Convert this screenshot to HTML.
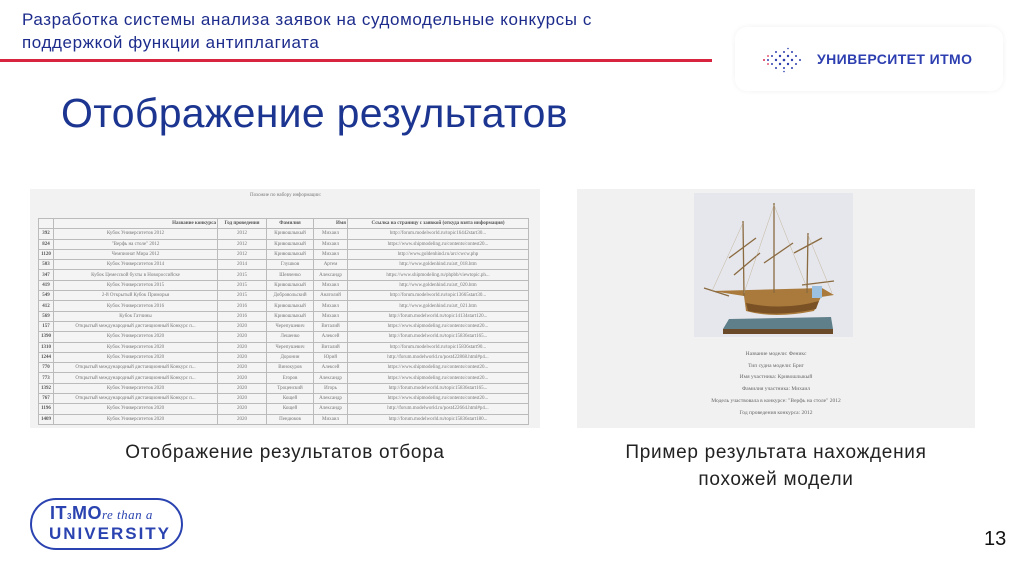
<!DOCTYPE html>
<html><head><meta charset="utf-8"><style>
body{margin:0;width:1024px;height:574px;background:#fff;position:relative;overflow:hidden;font-family:"Liberation Sans",sans-serif}
.a{position:absolute}
.hdr{left:22px;top:8px;font-size:17px;line-height:23px;color:#1d2c8c;letter-spacing:0.6px}
.title{left:61px;top:90px;font-size:41px;color:#1c3591;letter-spacing:0.3px}
.cap{font-size:19px;color:#222;text-align:center;line-height:27px;letter-spacing:0.7px}
table{border-collapse:separate;border-spacing:1px;font-family:"Liberation Serif",serif;font-size:5px;color:#777;background:#bbb;table-layout:fixed}
td{background:#f4f4f4;height:9.3px;padding:0 1px;text-align:center;white-space:nowrap;overflow:hidden;line-height:9px;border:0;box-sizing:border-box}
td.n{font-weight:bold;color:#555}
</style></head><body>
<div class="a hdr">Разработка системы анализа заявок на судомодельные конкурсы с<br>поддержкой функции антиплагиата</div>
<div class="a" style="left:0;top:59px;width:712px;height:3px;background:#d8243f"></div>
<div class="a" style="left:735px;top:27px;width:268px;height:64px;border-radius:12px;box-shadow:0 0 6px rgba(0,0,0,0.06);background:#fff"></div>
<svg class="a" style="left:762px;top:47px" width="52" height="26">
<g fill="#2d3fb0">
<circle cx="6" cy="13" r="1"/><circle cx="10" cy="9" r="1"/><circle cx="10" cy="17" r="1"/><circle cx="14" cy="5" r="1"/><circle cx="14" cy="13" r="1.2"/><circle cx="14" cy="21" r="1"/><circle cx="18" cy="9" r="1.2"/><circle cx="18" cy="17" r="1.2"/><circle cx="22" cy="5" r="1"/><circle cx="22" cy="13" r="1.3"/><circle cx="22" cy="21" r="1"/><circle cx="26" cy="9" r="1.2"/><circle cx="26" cy="17" r="1.2"/><circle cx="30" cy="5" r="1"/><circle cx="30" cy="13" r="1.2"/><circle cx="30" cy="21" r="1"/><circle cx="34" cy="9" r="1"/><circle cx="34" cy="17" r="1"/><circle cx="38" cy="13" r="1"/><circle cx="26" cy="1.5" r="0.8"/><circle cx="22" cy="24.5" r="0.8"/></g>
<g fill="#e0294a"><circle cx="2" cy="13" r="1"/><circle cx="6" cy="9" r="0.9"/><circle cx="6" cy="17" r="0.9"/></g>
</svg>
<div class="a" style="left:817px;top:51px;font-size:14px;font-weight:bold;color:#2d3fb0;letter-spacing:0.4px">УНИВЕРСИТЕТ ИТМО</div>
<div class="a title">Отображение результатов</div>

<div class="a" style="left:30px;top:189px;width:510px;height:239px;background:#f2f2f2"></div>
<div class="a" style="left:250px;top:193px;font-size:5px;color:#777;font-family:'Liberation Serif',serif">Похожие по набору информации:</div>
<div class="a" style="left:38px;top:218px;">
<table>
<tr><td style="width:14px"></td><td style="width:163px;text-align:right" class="n">Название конкурса</td><td class="n" style="width:48px">Год проведения</td><td class="n" style="width:46px">Фамилия</td><td class="n" style="width:33px;text-align:right">Имя</td><td class="n" style="width:180px">Ссылка на страницу с заявкой (откуда взята информация)</td></tr>
<tr><td class="n">392</td><td>Кубок Университетов 2012</td><td>2012</td><td>Кривошлыкый</td><td>Михаил</td><td>http://forum.modelworld.ru/topic16442start30...</td></tr>
<tr><td class="n">824</td><td>"Верфь на столе" 2012</td><td>2012</td><td>Кривошлыкый</td><td>Михаил</td><td>https://www.shipmodeling.ru/contents/contest20...</td></tr>
<tr><td class="n">1120</td><td>Чемпионат Мира 2012</td><td>2012</td><td>Кривошлыкый</td><td>Михаил</td><td>http://www.goldenhind.ru/arc/cwcw.php</td></tr>
<tr><td class="n">503</td><td>Кубок Университетов 2014</td><td>2014</td><td>Глушков</td><td>Артем</td><td>http://www.goldenhind.ru/art_018.htm</td></tr>
<tr><td class="n">347</td><td>Кубок Цемесской бухты в Новороссийске</td><td>2015</td><td>Шевченко</td><td>Александр</td><td>https://www.shipmodeling.ru/phpbb/viewtopic.ph...</td></tr>
<tr><td class="n">419</td><td>Кубок Университетов 2015</td><td>2015</td><td>Кривошлыкый</td><td>Михаил</td><td>http://www.goldenhind.ru/art_020.htm</td></tr>
<tr><td class="n">549</td><td>2-й Открытый Кубок Приморья</td><td>2015</td><td>Добровольский</td><td>Анатолий</td><td>http://forum.modelworld.ru/topic13665start30...</td></tr>
<tr><td class="n">412</td><td>Кубок Университетов 2016</td><td>2016</td><td>Кривошлыкый</td><td>Михаил</td><td>http://www.goldenhind.ru/art_021.htm</td></tr>
<tr><td class="n">569</td><td>Кубок Гатчины</td><td>2016</td><td>Кривошлыкый</td><td>Михаил</td><td>http://forum.modelworld.ru/topic14134start120...</td></tr>
<tr><td class="n">157</td><td>Открытый международный дистанционный Конкурс п...</td><td>2020</td><td>Черепушевич</td><td>Виталий</td><td>https://www.shipmodeling.ru/contents/contest20...</td></tr>
<tr><td class="n">1390</td><td>Кубок Университетов 2020</td><td>2020</td><td>Лешенко</td><td>Алексей</td><td>http://forum.modelworld.ru/topic15836start165...</td></tr>
<tr><td class="n">1310</td><td>Кубок Университетов 2020</td><td>2020</td><td>Черепушевич</td><td>Виталий</td><td>http://forum.modelworld.ru/topic15836start90...</td></tr>
<tr><td class="n">1244</td><td>Кубок Университетов 2020</td><td>2020</td><td>Доронин</td><td>Юрий</td><td>http://forum.modelworld.ru/post422868.html#p4...</td></tr>
<tr><td class="n">770</td><td>Открытый международный дистанционный Конкурс п...</td><td>2020</td><td>Винокуров</td><td>Алексей</td><td>https://www.shipmodeling.ru/contents/contest20...</td></tr>
<tr><td class="n">773</td><td>Открытый международный дистанционный Конкурс п...</td><td>2020</td><td>Егоров</td><td>Александр</td><td>https://www.shipmodeling.ru/contents/contest20...</td></tr>
<tr><td class="n">1392</td><td>Кубок Университетов 2020</td><td>2020</td><td>Троценский</td><td>Игорь</td><td>http://forum.modelworld.ru/topic15836start165...</td></tr>
<tr><td class="n">767</td><td>Открытый международный дистанционный Конкурс п...</td><td>2020</td><td>Кощей</td><td>Александр</td><td>https://www.shipmodeling.ru/contents/contest20...</td></tr>
<tr><td class="n">1196</td><td>Кубок Университетов 2020</td><td>2020</td><td>Кощей</td><td>Александр</td><td>http://forum.modelworld.ru/post422664.html#p4...</td></tr>
<tr><td class="n">1409</td><td>Кубок Университетов 2020</td><td>2020</td><td>Пендюков</td><td>Михаил</td><td>http://forum.modelworld.ru/topic15836start180...</td></tr>
</table></div>

<div class="a" style="left:577px;top:189px;width:398px;height:239px;background:#f1f1f1"></div>
<svg class="a" style="left:694px;top:193px" width="159" height="144">
<rect width="159" height="144" fill="#e6e7ec"/>
<polygon points="29,136 35,126 137,124 139,136" fill="#5f7f8a"/>
<rect x="29" y="136" width="110" height="5" fill="#6b4a2a"/>
<path d="M18,98 L50,103 L52,118 Q80,126 120,118 L127,104 L140,102 L128,95 L55,97 Z" fill="#a97a3c"/>
<path d="M52,110 Q90,118 125,108 L122,116 Q85,124 54,118 Z" fill="#7a5125"/>
<g stroke="#8a6a40" stroke-width="1.3" fill="none">
<line x1="49" y1="28" x2="50" y2="103"/><line x1="80" y1="10" x2="80" y2="100"/><line x1="114" y1="40" x2="113" y2="100"/>
<line x1="40" y1="82" x2="66" y2="60"/><line x1="35" y1="65" x2="62" y2="45"/><line x1="70" y1="70" x2="99" y2="50"/><line x1="100" y1="60" x2="128" y2="45"/>
<line x1="10" y1="95" x2="35" y2="103"/><line x1="108" y1="92" x2="140" y2="88"/>
</g>
<g stroke="#b9a88a" stroke-width="0.4"><line x1="49" y1="30" x2="18" y2="98"/><line x1="80" y1="12" x2="50" y2="100"/><line x1="80" y1="12" x2="113" y2="95"/><line x1="114" y1="42" x2="138" y2="100"/></g>
<rect x="118" y="93" width="10" height="12" fill="#9cc0e0"/>
</svg>
<div class="a" style="left:577px;top:349px;width:398px;text-align:center;font-family:'Liberation Serif',serif;font-size:5.5px;color:#666;line-height:11.7px">Название модели: Феникс<br>Тип судна модели: Бриг<br>Имя участника: Кривошлыкый<br>Фамилия участника: Михаил<br>Модель участвовала в конкурсе: "Верфь на столе" 2012<br>Год проведения конкурса: 2012</div>

<div class="a cap" style="left:30px;top:439px;width:510px">Отображение результатов отбора</div>
<div class="a cap" style="left:577px;top:439px;width:398px">Пример результата нахождения<br>похожей модели</div>

<div class="a" style="left:30px;top:498px;width:153px;height:52px;border:2px solid #2a43b0;border-radius:28px;box-sizing:border-box"></div>
<div class="a" style="left:50px;top:503px;font-size:18px;font-weight:bold;color:#2a43b0;letter-spacing:0.5px">IT<span style="font-size:8px">3</span>MO<span style="font-family:'Liberation Serif',serif;font-style:italic;font-weight:normal;font-size:13px">re than a</span></div>
<div class="a" style="left:49px;top:524px;font-size:17px;font-weight:bold;color:#2a43b0;letter-spacing:2px">UNIVERSITY</div>
<div class="a" style="left:984px;top:528px;font-size:20px;color:#111">13</div>
</body></html>
